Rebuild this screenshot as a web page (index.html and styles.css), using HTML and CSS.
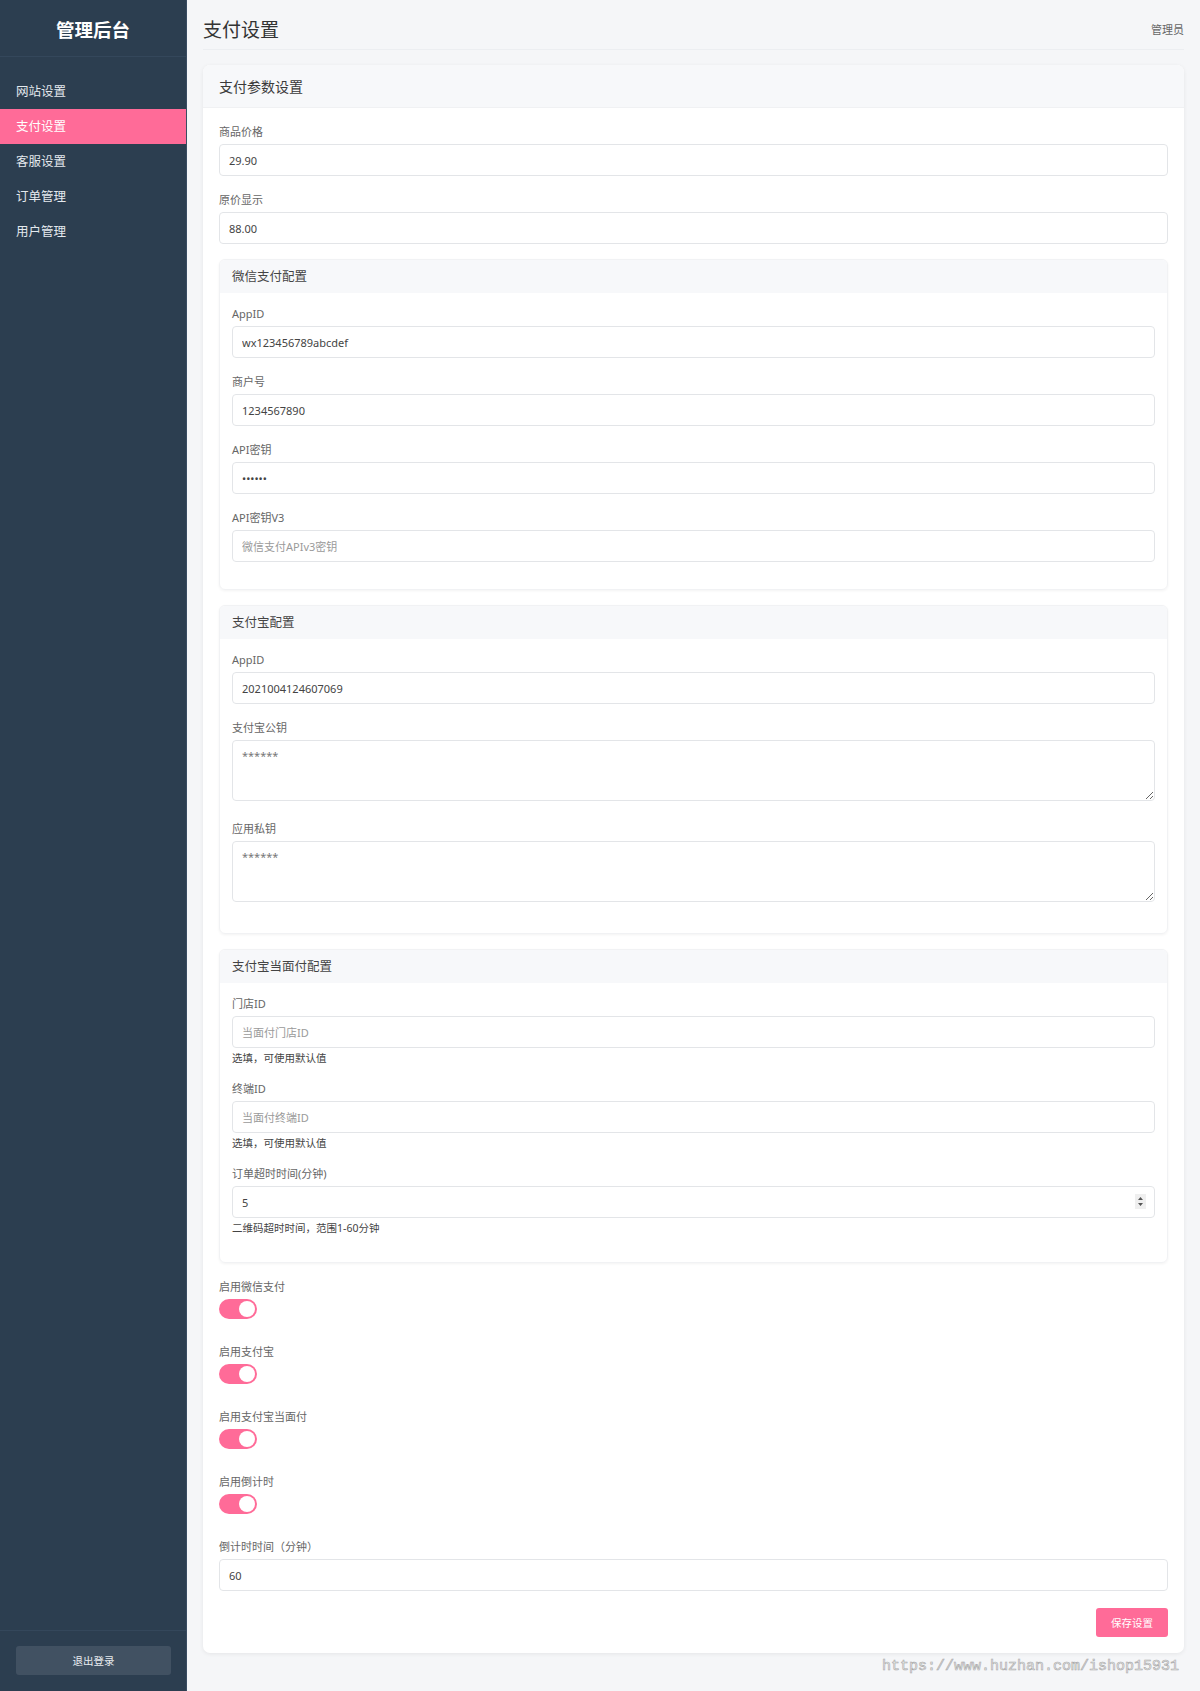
FILE: index.html
```html
<!DOCTYPE html>
<html lang="zh-CN">
<head>
	<meta charset="utf-8">
	<title>支付设置 - 管理后台</title>
	<link rel="stylesheet" href="styles.css">
</head>
<body>
	<div class="layout">
		<aside class="sidebar">
			<div class="brand">管理后台</div>
			<nav class="nav">
				<a class="nav-item" href="#">网站设置</a>
				<a class="nav-item active" href="#">支付设置</a>
				<a class="nav-item" href="#">客服设置</a>
				<a class="nav-item" href="#">订单管理</a>
				<a class="nav-item" href="#">用户管理</a>
			</nav>
			<div class="sidebar-foot">
				<button class="logout">退出登录</button>
			</div>
		</aside>

		<main class="main">
			<header class="topbar">
				<h1 class="page-title">支付设置</h1>
				<span class="user">管理员</span>
			</header>

			<section class="card">
				<div class="card-head">支付参数设置</div>
				<form class="card-body">
					<div class="field">
						<label>商品价格</label>
						<input class="input" type="text" value="29.90">
					</div>
					<div class="field">
						<label>原价显示</label>
						<input class="input" type="text" value="88.00">
					</div>

					<!-- 微信 -->
					<div class="sub-card">
						<div class="sub-head">微信支付配置</div>
						<div class="sub-body">
							<div class="field">
								<label>AppID</label>
								<input class="input" type="text" value="wx123456789abcdef">
							</div>
							<div class="field">
								<label>商户号</label>
								<input class="input" type="text" value="1234567890">
							</div>
							<div class="field">
								<label>API密钥</label>
								<input class="input" type="password" value="123456">
							</div>
							<div class="field">
								<label>API密钥V3</label>
								<input class="input" type="text" placeholder="微信支付APIv3密钥">
							</div>
						</div>
					</div>

					<!-- 支付宝 -->
					<div class="sub-card">
						<div class="sub-head">支付宝配置</div>
						<div class="sub-body">
							<div class="field">
								<label>AppID</label>
								<input class="input" type="text" value="2021004124607069">
							</div>
							<div class="field field-area">
								<label>支付宝公钥</label>
								<textarea class="input area">******</textarea>
							</div>
							<div class="field field-area">
								<label>应用私钥</label>
								<textarea class="input area">******</textarea>
							</div>
						</div>
					</div>

					<!-- 当面付 -->
					<div class="sub-card">
						<div class="sub-head">支付宝当面付配置</div>
						<div class="sub-body">
							<div class="field">
								<label>门店ID</label>
								<input class="input" type="text" placeholder="当面付门店ID">
								<div class="help">选填，可使用默认值</div>
							</div>
							<div class="field">
								<label>终端ID</label>
								<input class="input" type="text" placeholder="当面付终端ID">
								<div class="help">选填，可使用默认值</div>
							</div>
							<div class="field">
								<label>订单超时时间(分钟)</label>
								<div class="num-wrap">
									<input class="input" type="text" value="5">
									<span class="spin">
										<svg width="11" height="15" viewBox="0 0 11 15"><path d="M5.5 3 L8 6 L3 6 Z M5.5 12 L8 9 L3 9 Z" fill="#555"/></svg>
									</span>
								</div>
								<div class="help">二维码超时时间，范围1-60分钟</div>
							</div>
						</div>
					</div>

					<div class="field field-switch">
						<label>启用微信支付</label>
						<span class="switch on"><span class="knob"></span></span>
					</div>
					<div class="field field-switch">
						<label>启用支付宝</label>
						<span class="switch on"><span class="knob"></span></span>
					</div>
					<div class="field field-switch">
						<label>启用支付宝当面付</label>
						<span class="switch on"><span class="knob"></span></span>
					</div>
					<div class="field field-switch">
						<label>启用倒计时</label>
						<span class="switch on"><span class="knob"></span></span>
					</div>
					<div class="field">
						<label>倒计时时间（分钟）</label>
						<input class="input" type="text" value="60">
					</div>

					<div class="actions">
						<button type="button" class="btn-save">保存设置</button>
					</div>
				</form>
			</section>
		</main>
	</div>

	<div class="watermark">https://www.huzhan.com/ishop15931</div>
</body>
</html>
```

FILE: styles.css
```css
html, body {
	margin: 0;
	padding: 0;
	font-family: "Noto Sans", "Noto Sans CJK SC", sans-serif;
	background-color: #f5f6f8;
	color: #333;
}

.layout {
	display: flex;
	min-height: 100vh;
}

/* ---------- sidebar ---------- */
.sidebar {
	width: 187px;
	flex-shrink: 0;
	height: 100vh;
	background-color: #2c3e50;
	display: flex;
	flex-direction: column;
	border-right: 1px solid #3a4d63;
	box-sizing: border-box;
}

.brand {
	height: 57px;
	box-sizing: border-box;
	padding-top: 1px;
	display: flex;
	align-items: center;
	justify-content: center;
	color: #fff;
	font-size: 18.5px;
	font-weight: bold;
	border-bottom: 1px solid #34475b;
}

.nav {
	flex: 1;
	padding-top: 17px;
}

.nav-item {
	display: block;
	height: 35px;
	line-height: 35px;
	padding-left: 16px;
	color: #e4e9ee;
	font-size: 12.5px;
	text-decoration: none;
}
.nav-item.active {
	background-color: #ff6b98;
	color: #fff;
}

.sidebar-foot {
	border-top: 1px solid #34475b;
	padding: 15px 15px 16px 16px;
}

.logout {
	display: block;
	width: 100%;
	height: 29px;
	border: none;
	border-radius: 3px;
	background-color: #415162;
	color: #e8ecf0;
	font-family: inherit;
	font-size: 10.5px;
}

/* ---------- main ---------- */
.main {
	flex: 1;
	padding: 0 16px 20px;
	min-width: 0;
}

.topbar {
	height: 50px;
	box-sizing: border-box;
	padding-top: 8px;
	display: flex;
	align-items: center;
	justify-content: space-between;
	border-bottom: 1px solid #eceef1;
}

.page-title {
	margin: 0;
	font-size: 19px;
	font-weight: normal;
	color: #333;
}

.user {
	font-size: 11px;
	color: #666;
}

.card {
	margin-top: 15px;
	background-color: #fff;
	border-radius: 7px;
	box-shadow: 0 1px 4px rgba(0, 0, 0, 0.07);
	overflow: hidden;
}

.card-head {
	height: 43px;
	line-height: 43px;
	padding: 0 16px;
	background-color: #f7f8fa;
	border-bottom: 1px solid #f0f1f3;
	box-sizing: border-box;
	font-size: 14px;
	color: #3a3a3a;
}

.card-body {
	padding: 15px 16px 16px;
	margin: 0;
}

.field {
	margin-bottom: 15px;
}
.field label {
	display: block;
	font-size: 11px;
	line-height: 17px;
	color: #666;
	margin-bottom: 4px;
}

.input {
	display: block;
	width: 100%;
	box-sizing: border-box;
	height: 32px;
	padding: 0 9px;
	border: 1px solid #e3e5e8;
	border-radius: 4px;
	font-family: inherit;
	font-size: 11px;
	color: #444;
	background-color: #fff;
	outline: none;
}
.input::placeholder {
	color: #9a9a9a;
}

.area {
	height: 61px;
	padding: 7px 9px;
	color: #777;
	line-height: 16px;
	resize: vertical;
}
.field-area {
	margin-bottom: 19px;
}

.help {
	margin-top: 3px;
	font-size: 10.5px;
	line-height: 14px;
	color: #444;
}

.num-wrap {
	position: relative;
}
.spin {
	position: absolute;
	right: 9px;
	top: 8px;
	width: 11px;
	height: 15px;
	background-color: #efefef;
	display: flex;
}

/* sub cards */
.sub-card {
	margin-bottom: 15px;
	border-radius: 6px;
	border: 1px solid #f1f2f4;
	box-shadow: 0 1px 3px rgba(0, 0, 0, 0.05);
	overflow: hidden;
}

.sub-head {
	height: 33px;
	line-height: 33px;
	padding: 0 12px;
	background-color: #f7f8fa;
	font-size: 12.5px;
	color: #444;
}

.sub-body {
	padding: 12px 12px 12px;
}

/* switches */
.field-switch {
	margin-bottom: 24px;
}

.switch {
	display: block;
	position: relative;
	width: 38px;
	height: 20px;
	border-radius: 10px;
	background-color: #ccc;
}
.switch.on {
	background-color: #ff6b98;
}
.knob {
	position: absolute;
	top: 2px;
	right: 2px;
	width: 16px;
	height: 16px;
	border-radius: 50%;
	background-color: #fff;
}

.actions {
	display: flex;
	justify-content: flex-end;
	padding-top: 2px;
}

.btn-save {
	width: 72px;
	height: 29px;
	border: none;
	border-radius: 3px;
	background-color: #ff6b98;
	color: #fff;
	font-family: inherit;
	font-size: 10.5px;
}

.watermark {
	position: absolute;
	left: 882px;
	top: 1657px;
	font-family: "Liberation Mono", monospace;
	font-size: 15px;
	line-height: 20px;
	color: #f2f2f2;
	-webkit-text-stroke: 0.6px #a8a8a8;
}
```
